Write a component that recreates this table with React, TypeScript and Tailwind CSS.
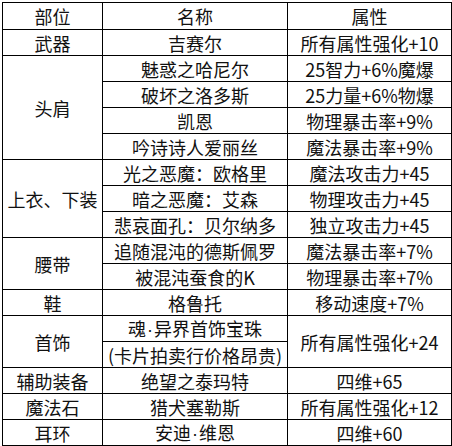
import React from "react";

type Row = { part?: string; span?: number; name: React.ReactNode; attr?: string; attrSpan?: number };

const Dot = () => <span className="font-['Liberation_Sans'] px-[1px]">·</span>;

const rows: Row[] = [
  { part: "武器", name: "吉赛尔", attr: "所有属性强化+10" },
  { part: "头肩", span: 4, name: "魅惑之哈尼尔", attr: "25智力+6%魔爆" },
  { name: "破坏之洛多斯", attr: "25力量+6%物爆" },
  { name: "凯恩", attr: "物理暴击率+9%" },
  { name: "吟诗诗人爱丽丝", attr: "魔法暴击率+9%" },
  { part: "上衣、下装", span: 3, name: "光之恶魔：欧格里", attr: "魔法攻击力+45" },
  { name: "暗之恶魔：艾森", attr: "物理攻击力+45" },
  { name: "悲哀面孔：贝尔纳多", attr: "独立攻击力+45" },
  { part: "腰带", span: 2, name: "追随混沌的德斯佩罗", attr: "魔法暴击率+7%" },
  { name: "被混沌蚕食的K", attr: "物理暴击率+7%" },
  { part: "鞋", name: "格鲁托", attr: "移动速度+7%" },
  {
    part: "首饰",
    span: 2,
    name: (
      <>
        魂<Dot />异界首饰宝珠
      </>
    ),
    attr: "所有属性强化+24",
    attrSpan: 2,
  },
  { name: "(卡片拍卖行价格昂贵)" },
  { part: "辅助装备", name: "绝望之泰玛特", attr: "四维+65" },
  { part: "魔法石", name: "猎犬塞勒斯", attr: "所有属性强化+12" },
  {
    part: "耳环",
    name: (
      <>
        安迪<Dot />维恩
      </>
    ),
    attr: "四维+60",
  },
];

const cell = "border border-black text-center align-middle p-0";

export default function App() {
  return (
    <div className="bg-white w-[452px] h-[446px] pt-[2px] pl-[2px] font-['Microsoft_YaHei','Noto_Sans_CJK_SC',sans-serif] text-[18px] leading-none text-[#111]">
      <table className="table-fixed border-collapse w-[449px]">
        <colgroup>
          <col className="w-[100px]" />
          <col className="w-[185px]" />
          <col className="w-[164px]" />
        </colgroup>
        <tbody>
          <tr className="h-[27px]">
            <td className={cell}>部位</td>
            <td className={cell}>名称</td>
            <td className={cell}>属性</td>
          </tr>
          {rows.map((r, i) => (
            <tr key={i} className="h-[26px]">
              {r.part && (
                <td className={cell} rowSpan={r.span ?? 1}>
                  {r.part}
                </td>
              )}
              <td className={cell + " whitespace-nowrap"}>{r.name}</td>
              {r.attr && (
                <td className={cell} rowSpan={r.attrSpan ?? 1}>
                  {r.attr}
                </td>
              )}
            </tr>
          ))}
        </tbody>
      </table>
    </div>
  );
}
